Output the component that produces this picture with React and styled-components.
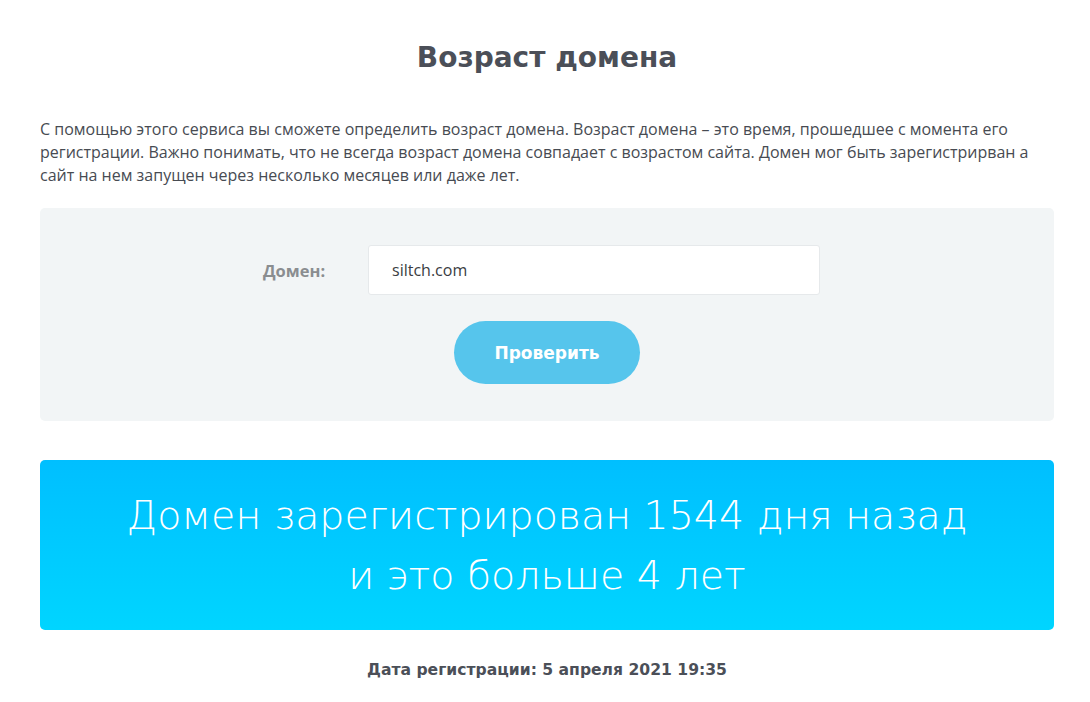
import React from 'react';
import styled, { createGlobalStyle } from 'styled-components';

const GlobalStyle = createGlobalStyle`
  body {
    margin: 0;
    background: #fff;
    font-family: "Open Sans", Arial, sans-serif;
  }
`;

const App = () => (
  <>
    <GlobalStyle />
    <Page>
      <Title>Возраст домена</Title>

      <Intro>
        С помощью этого сервиса вы сможете определить возраст домена. Возраст домена – это время,
        прошедшее с момента его регистрации. Важно понимать, что не всегда возраст домена совпадает
        с возрастом сайта. Домен мог быть зарегистрирван а сайт на нем запущен через несколько
        месяцев или даже лет.
      </Intro>

      <FormBox>
        <Row>
          <Label>Домен:</Label>
          <Input defaultValue="siltch.com" />
        </Row>

        <Button type="button">Проверить</Button>
      </FormBox>

      <Result>
        Домен зарегистрирован 1544 дня назад
        <br />
        и это больше 4 лет
      </Result>

      <RegDate>Дата регистрации: 5 апреля 2021 19:35</RegDate>
    </Page>
  </>
);

const Page = styled.div`
  width: 1014px;
  margin-left: 40px;
  padding-top: 38px;
`;

const Title = styled.h1`
  margin: 0 0 40px;

  color: #4b4f58;
  font-family: "DejaVu Sans", sans-serif;
  font-size: 28px;
  font-weight: bold;
  line-height: 40px;
  text-align: center;
`;

const Intro = styled.p`
  margin: 0 0 21px;

  color: #474b52;
  font-size: 16px;
  line-height: 23px;
`;

const FormBox = styled.div`
  display: flex;
  flex-direction: column;
  align-items: center;
  padding: 37px 0;

  background: #f2f5f6;
  border-radius: 5px;
`;

const Row = styled.div`
  display: flex;
  align-items: center;
  margin-right: 11px;
`;

const Label = styled.label`
  width: 105px;

  color: #8a8d90;
  font-size: 16.5px;
  font-weight: bold;
`;

const Input = styled.input`
  box-sizing: border-box;
  width: 452px;
  height: 50px;
  padding: 0 23px;

  border: 1px solid #e6e9eb;
  border-radius: 3px;
  outline: none;
  background: #fff;

  color: #3a3d42;
  font-family: "Open Sans", Arial, sans-serif;
  font-size: 16px;
`;

const Button = styled.button`
  width: 186px;
  height: 63px;
  margin-top: 26px;

  border: 0;
  border-radius: 32px;
  background: #56c5ec;

  color: #fff;
  font-family: "DejaVu Sans", sans-serif;
  font-size: 17px;
  font-weight: bold;
`;

const Result = styled.div`
  margin-top: 39px;
  padding: 25px 0;

  background: linear-gradient(180deg, #00bfff 0%, #00d5ff 100%);
  border-radius: 5px;

  color: #fff;
  font-family: "DejaVu Sans", sans-serif;
  font-size: 39.5px;
  font-weight: 200;
  line-height: 60px;
  text-align: center;
`;

const RegDate = styled.div`
  margin-top: 31px;

  color: #4b4f58;
  font-family: "DejaVu Sans", sans-serif;
  font-size: 15.6px;
  font-weight: bold;
  text-align: center;
`;

export default App;
